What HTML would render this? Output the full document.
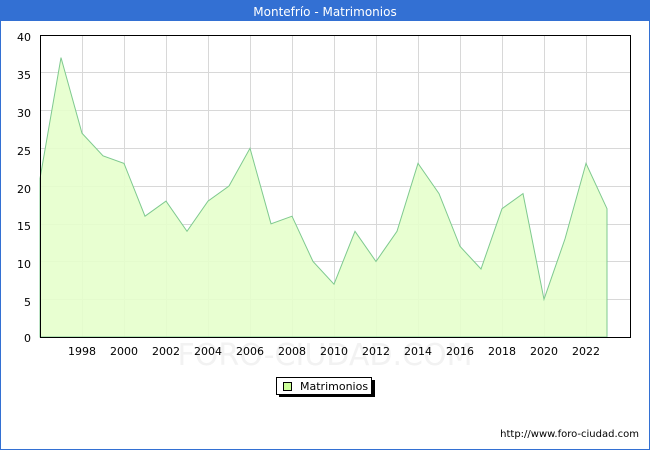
<!DOCTYPE html><html><head><style>body{margin:0;width:650px;height:450px;overflow:hidden;background:#fff;font-family:"DejaVu Sans","Liberation Sans",sans-serif}</style></head><body>
<svg width="650" height="450" xmlns="http://www.w3.org/2000/svg" font-family="DejaVu Sans, Liberation Sans, sans-serif">
<rect x="0.5" y="0.5" width="649" height="449" fill="#fff" stroke="#3370d3"/>
<rect x="0" y="0" width="650" height="21" fill="#3370d3"/>
<text x="325" y="16" fill="#fff" font-size="12" text-anchor="middle">Montefrío - Matrimonios</text>
<g stroke="#d8d8d8" stroke-width="1">
<line x1="40" x2="630" y1="299.5" y2="299.5"/><line x1="40" x2="630" y1="261.5" y2="261.5"/><line x1="40" x2="630" y1="224.5" y2="224.5"/><line x1="40" x2="630" y1="186.5" y2="186.5"/><line x1="40" x2="630" y1="148.5" y2="148.5"/><line x1="40" x2="630" y1="110.5" y2="110.5"/><line x1="40" x2="630" y1="72.5" y2="72.5"/>
<line x1="82.5" x2="82.5" y1="35" y2="337"/><line x1="124.5" x2="124.5" y1="35" y2="337"/><line x1="166.5" x2="166.5" y1="35" y2="337"/><line x1="208.5" x2="208.5" y1="35" y2="337"/><line x1="250.5" x2="250.5" y1="35" y2="337"/><line x1="292.5" x2="292.5" y1="35" y2="337"/><line x1="334.5" x2="334.5" y1="35" y2="337"/><line x1="376.5" x2="376.5" y1="35" y2="337"/><line x1="418.5" x2="418.5" y1="35" y2="337"/><line x1="460.5" x2="460.5" y1="35" y2="337"/><line x1="502.5" x2="502.5" y1="35" y2="337"/><line x1="544.5" x2="544.5" y1="35" y2="337"/><line x1="586.5" x2="586.5" y1="35" y2="337"/>
</g>
<text x="325" y="365" font-size="30" fill="#f2f2f2" text-anchor="middle">FORO-CIUDAD.COM</text>
<polygon fill="#e6ffcc" fill-opacity="0.9" stroke="#7ec98f" stroke-width="1" points="40,337 40,178.5 61,57.6 82,133.2 103,155.8 124,163.4 145,216.2 166,201.1 187,231.3 208,201.1 229,186 250,148.3 271,223.8 292,216.2 313,261.5 334,284.2 355,231.3 376,261.5 397,231.3 418,163.4 439,193.6 460,246.4 481,269 502,208.7 523,193.6 544,299.3 565,238.9 586,163.4 607,208.7 607,337"/>
<rect x="40.5" y="35.5" width="590" height="302" fill="none" stroke="#000"/>
<g font-size="11" fill="#000" text-anchor="end">
<text x="31" y="41">40</text><text x="31" y="79">35</text><text x="31" y="117">30</text><text x="31" y="155">25</text><text x="31" y="193">20</text><text x="31" y="230">15</text><text x="31" y="268">10</text><text x="31" y="306">5</text><text x="31" y="342">0</text>
</g>
<g font-size="11" fill="#000" text-anchor="middle">
<text x="82" y="355">1998</text><text x="124" y="355">2000</text><text x="166" y="355">2002</text><text x="208" y="355">2004</text><text x="250" y="355">2006</text><text x="292" y="355">2008</text><text x="334" y="355">2010</text><text x="376" y="355">2012</text><text x="418" y="355">2014</text><text x="460" y="355">2016</text><text x="502" y="355">2018</text><text x="544" y="355">2020</text><text x="586" y="355">2022</text>
</g>
<rect x="279" y="380" width="96" height="17" fill="#000"/>
<rect x="276.5" y="377.5" width="95" height="17" fill="#fff" stroke="#000"/>
<rect x="283.5" y="382.5" width="8" height="8" fill="#ccff99" stroke="#000"/>
<text x="300" y="390" font-size="11">Matrimonios</text>
<text x="639" y="437" font-size="10" text-anchor="end">http://www.foro-ciudad.com</text>
</svg>
</body></html>
